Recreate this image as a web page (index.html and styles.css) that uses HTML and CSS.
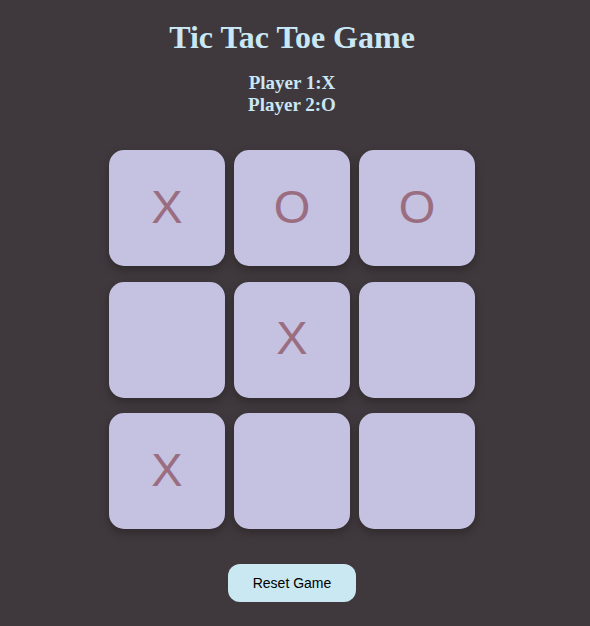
FILE: index.html
```html
<!DOCTYPE html>
<html>
<head>
<meta charset="utf-8">
<link rel="stylesheet" href="styles.css">
</head>
<body>
<main class="app">
  <h1 class="title">Tic Tac Toe Game</h1>
  <div class="players">
    <div>Player 1:X</div>
    <div>Player 2:O</div>
  </div>
  <div class="board">
    <div class="cell">X</div>
    <div class="cell">O</div>
    <div class="cell">O</div>
    <div class="cell"></div>
    <div class="cell">X</div>
    <div class="cell"></div>
    <div class="cell">X</div>
    <div class="cell"></div>
    <div class="cell"></div>
  </div>
  <button class="reset">Reset Game</button>
</main>
</body>
</html>
```
FILE: styles.css
```css
html, body {
  margin: 0;
  padding: 0;
  background: #3f383c;
  height: 100%;
}
.app {
  width: 584px;
  display: flex;
  flex-direction: column;
  align-items: center;
  font-family: "Liberation Serif", "Times New Roman", serif;
  color: #c9e7f4;
}
.title {
  font-size: 32px;
  font-weight: bold;
  margin: 19px 0 0;
  line-height: 37px;
}
.players {
  margin-top: 16px;
  font-size: 19px;
  font-weight: bold;
  line-height: 22px;
  text-align: center;
}
.board {
  margin-top: 34px;
  display: grid;
  grid-template-columns: repeat(3, 116px);
  grid-auto-rows: 116px;
  column-gap: 9px;
  row-gap: 15.5px;
}
.cell {
  background: #c5c1e0;
  border-radius: 15px;
  box-shadow: 0 4px 10px rgba(0, 0, 0, 0.25);
  display: flex;
  align-items: center;
  justify-content: center;
  padding-bottom: 4px;
  box-sizing: border-box;
  font-family: "Liberation Sans", Arial, sans-serif;
  font-size: 47px;
  color: #9a6e80;
}
.reset {
  margin-top: 35px;
  width: 128px;
  height: 38px;
  border: none;
  border-radius: 12px;
  background: #c9e8f2;
  font-family: "Liberation Sans", Arial, sans-serif;
  font-size: 14px;
  color: #000;
}
```
